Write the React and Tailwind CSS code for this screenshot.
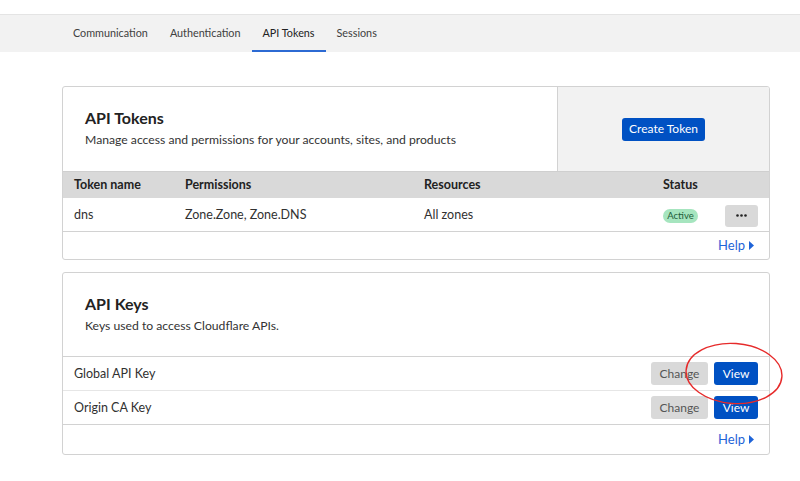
import React from "react";

const font = { fontFamily: 'Lato, "Open Sans", Arial, sans-serif' };

function Help({ h }) {
  return (
    <div className={"flex items-center justify-end pr-[14px] text-[13px] text-[#1f64d8] " + h}>
      <span>Help</span>
      <svg width="6" height="9" viewBox="0 0 6 9" className="ml-[4px]">
        <path d="M0 0 L5 4.5 L0 9 Z" fill="#1f64d8" />
      </svg>
    </div>
  );
}

export default function App() {
  return (
    <div className="relative h-[481px] w-[800px] overflow-hidden bg-white text-[#313131]" style={font}>
      <div className="mt-[14px] flex h-[38px] border-t border-[#e4e4e4] bg-[#f2f2f2] pl-[62px] text-[10.8px] text-[#404040]">
        {["Communication", "Authentication", "API Tokens", "Sessions"].map((t) => (
          <div
            key={t}
            className={
              "flex items-center px-[11px] " +
              (t === "API Tokens" ? "border-b-[2px] border-[#2c6ad3] pt-[2px] text-[#222]" : "")
            }
          >
            {t}
          </div>
        ))}
      </div>

      <div className="ml-[62px] mt-[34px] flex w-[708px] flex-col gap-[12px]">
        {/* API Tokens card */}
        <div className="overflow-hidden rounded-[3px] border border-[#d2d2d2]">
          <div className="flex h-[84px]">
            <div className="flex flex-1 flex-col justify-center pb-[3px] pl-[22px]">
              <div className="text-[16px] font-bold leading-[20px] text-[#222]">API Tokens</div>
              <div className="mt-[4px] text-[12.2px] leading-[16px] text-[#333]">
                Manage access and permissions for your accounts, sites, and products
              </div>
            </div>
            <div className="flex w-[212px] items-center justify-center border-l border-[#d2d2d2] bg-[#f2f2f2]">
              <button className="h-[23px] w-[83px] rounded-[3px] bg-[#0051c3] text-[12px] text-white">
                Create Token
              </button>
            </div>
          </div>
          <div className="flex h-[27px] items-center border-t border-[#cfcfcf] bg-[#d9d9d9] text-[12.5px] font-bold text-[#222]">
            <div className="w-[111px] pl-[11px]">Token name</div>
            <div className="w-[239px] pl-[11px]">Permissions</div>
            <div className="w-[239px] pl-[11px]">Resources</div>
            <div className="pl-[11px]">Status</div>
          </div>
          <div className="flex h-[34px] items-center border-b border-[#d2d2d2] pt-[2px] text-[12.5px]">
            <div className="w-[111px] pl-[11px]">dns</div>
            <div className="w-[239px] pl-[11px]">Zone.Zone, Zone.DNS</div>
            <div className="w-[239px] pl-[11px]">All zones</div>
            <div className="w-[73px] pl-[11px]">
              <span className="inline-flex h-[14px] w-[35px] items-center justify-center rounded-full bg-[#a6e5bf] text-[9.5px] text-[#1d5e3a]">
                Active
              </span>
            </div>
            <button className="flex h-[22px] w-[33px] items-center justify-center rounded-[3px] bg-[#d9d9d9]">
              <svg width="11" height="3" viewBox="0 0 11 3">
                <circle cx="1.5" cy="1.5" r="1.3" fill="#222" />
                <circle cx="5.5" cy="1.5" r="1.3" fill="#222" />
                <circle cx="9.5" cy="1.5" r="1.3" fill="#222" />
              </svg>
            </button>
          </div>
          <Help h="h-[27px]" />
        </div>

        {/* API Keys card */}
        <div className="overflow-hidden rounded-[3px] border border-[#d2d2d2]">
          <div className="flex h-[84px] flex-col justify-center border-b border-[#d2d2d2] pb-[2px] pl-[22px]">
            <div className="text-[16px] font-bold leading-[20px] text-[#222]">API Keys</div>
            <div className="mt-[4px] text-[12.2px] leading-[16px] text-[#333]">Keys used to access Cloudflare APIs.</div>
          </div>
          {["Global API Key", "Origin CA Key"].map((k, i) => (
            <div
              key={k}
              className={
                "flex h-[34px] items-center justify-between pl-[11px] pr-[11px] text-[12.5px] " +
                (i === 0 ? "border-b border-[#e6e6e6]" : "border-b border-[#d2d2d2]")
              }
            >
              <span className="pt-[2px]">{k}</span>
              <div className="flex gap-[6px]">
                <button className="h-[23px] w-[57px] rounded-[3px] bg-[#d9d9d9] text-[12px] text-[#555]">Change</button>
                <button className="h-[23px] w-[44px] rounded-[3px] bg-[#0051c3] text-[12px] text-white">View</button>
              </div>
            </div>
          ))}
          <Help h="h-[29px]" />
        </div>
      </div>

      <svg className="pointer-events-none absolute left-[680px] top-[336px]" width="110" height="76" viewBox="0 0 110 76">
        <ellipse cx="54" cy="37.5" rx="48" ry="30" fill="none" stroke="#e62a2a" strokeWidth="1.4" transform="rotate(4 54 37.5)" />
      </svg>
    </div>
  );
}
